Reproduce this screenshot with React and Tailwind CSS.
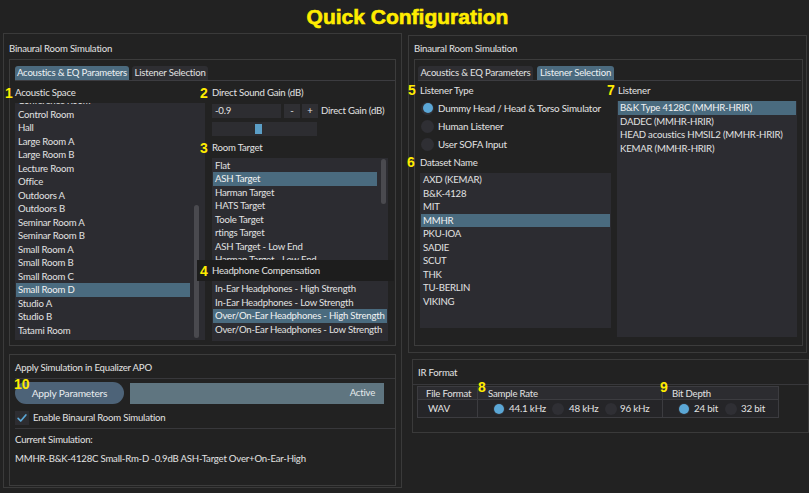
import React from 'react';

const acoustic = [
  'Conference Room', 'Control Room', 'Hall', 'Large Room A', 'Large Room B', 'Lecture Room',
  'Office', 'Outdoors A', 'Outdoors B', 'Seminar Room A', 'Seminar Room B', 'Small Room A',
  'Small Room B', 'Small Room C', 'Small Room D', 'Studio A', 'Studio B', 'Tatami Room',
];

const targets = [
  'Flat', 'ASH Target', 'Harman Target', 'HATS Target', 'Toole Target', 'rtings Target',
  'ASH Target - Low End', 'Harman Target - Low End', 'HATS Target - Low End',
];

const headphones = [
  'In-Ear Headphones - High Strength', 'In-Ear Headphones - Low Strength',
  'Over/On-Ear Headphones - High Strength', 'Over/On-Ear Headphones - Low Strength',
];

const datasets = ['AXD (KEMAR)', 'B&K-4128', 'MIT', 'MMHR', 'PKU-IOA', 'SADIE', 'SCUT', 'THK', 'TU-BERLIN', 'VIKING'];

const listeners = [
  'B&K Type 4128C (MMHR-HRIR)', 'DADEC (MMHR-HRIR)', 'HEAD acoustics HMSIL2 (MMHR-HRIR)', 'KEMAR (MMHR-HRIR)',
];

const Num = ({ children, className = '' }) => (
  <span
    className={`absolute text-[14px] leading-none font-bold tracking-normal text-[#ffec00] font-['Liberation_Sans',Arial,sans-serif] ${className}`}
  >
    {children}
  </span>
);

// plain list box with optional scroll bar on the right
const ListBox = ({ items, selected, className = '', offset = '', bar = null }) => (
  <div className={`flex bg-[#2c2c31] overflow-hidden px-[1px] ${className}`}>
    <div className={`flex-1 min-w-0 ${offset}`}>
      {items.map((t, i) => (
        <div
          key={t}
          className={`h-[13.5px] leading-[13.5px] pl-[2px] whitespace-nowrap ${
            i === selected ? 'bg-[#4a6b7f] text-[#f2f2f2]' : ''
          }`}
        >
          {t}
        </div>
      ))}
    </div>
    {bar}
  </div>
);

const Tabs = ({ active, first, second, className = '' }) => (
  <div className={`flex items-end h-[15px] border-b border-[#3c3c40] whitespace-nowrap ${className}`}>
    <div
      className={`h-[14px] ${first} rounded-t-[3px] flex items-center justify-center ${
        active === 0 ? 'bg-[#4b6a7e] text-[#eef2f4]' : 'bg-[#2e2e32]'
      }`}
    >
      Acoustics &amp; EQ Parameters
    </div>
    <div
      className={`h-[14px] ${second} rounded-t-[3px] flex items-center justify-center ${
        active === 1 ? 'bg-[#4b6a7e] text-[#eef2f4]' : 'bg-[#2e2e32]'
      }`}
    >
      Listener Selection
    </div>
  </div>
);

const Radio = ({ on, size = 'w-[13px] h-[13px]' }) => (
  <span className={`${size} rounded-full bg-[#2f2f34] flex items-center justify-center shrink-0`}>
    {on && <span className="w-[10px] h-[10px] rounded-full bg-[#5ba7d6]" />}
  </span>
);

const LeftColumn = () => (
  <div className="ml-[3px] w-[399px] h-[455px] border border-[#3a3a3a] pl-[5px]">
    <div className="h-[25px] pt-[5px] flex items-center">Binaural Room Simulation</div>

    <div className="w-[387px] h-[287px] border border-[#3c3c3c] px-[5px] pt-[6px]">
      <Tabs active={0} first="w-[114px]" second="w-[76px] ml-[3px]" className="mr-[-5px]" />

      <div className="flex mt-[6px]">
        <div className="w-[190px]">
          <div className="relative h-[12px] leading-[12px]">
            <Num className="-left-[10px] top-[-1px]">1</Num>
            Acoustic Space
          </div>
          <ListBox
            items={acoustic}
            selected={14}
            className="mt-[4px] h-[237px]"
            offset="-mt-[9px]"
            bar={
              <div className="w-[5px] ml-[4px] mr-[5px]">
                <div className="mt-[102px] h-[133px] rounded-[3px] bg-[#4a4a4f]" />
              </div>
            }
          />
        </div>

        <div className="ml-[7px] w-[176px]">
          <div className="relative h-[12px] leading-[12px]">
            <Num className="-left-[12px] top-[-1px]">2</Num>
            Direct Sound Gain (dB)
          </div>
          <div className="mt-[5px] h-[14px] flex items-center">
            <div className="w-[69px] h-full bg-[#2d2d31] pl-[3px] leading-[14px]">-0.9</div>
            <div className="ml-[3px] w-[16px] h-full bg-[#2f2f33] flex items-center justify-center">-</div>
            <div className="ml-[2px] w-[16px] h-full bg-[#2f2f33] flex items-center justify-center">+</div>
            <div className="ml-[3px] whitespace-nowrap">Direct Gain (dB)</div>
          </div>
          <div className="mt-[4px] w-[105px] h-[14px] bg-[#2d2d31] flex items-center pl-[43px]">
            <div className="w-[7px] h-[10px] bg-[#5b9ec6]" />
          </div>
          <div className="relative mt-[6px] h-[12px] leading-[12px]">
            <Num className="-left-[12px] top-[-1px]">3</Num>
            Room Target
          </div>
          <ListBox
            items={targets}
            selected={1}
            className="mt-[4px] h-[102px]"
            offset="pt-[0.5px]"
            bar={
              <div className="w-[5px] ml-[4px] mr-[1px]">
                <div className="mt-[1px] h-[45px] rounded-[3px] bg-[#4a4a4f]" />
              </div>
            }
          />
          <div className="relative h-[21px] pt-[2px] -ml-[15px] -mr-[6px] pl-[15px] bg-[#1d1d1d] flex items-center">
            <Num className="left-[3px] top-[4px]">4</Num>
            Headphone Compensation
          </div>
          <ListBox items={headphones} selected={2} className="h-[60px]" offset="pt-[1px]" />
        </div>
      </div>
    </div>

    <div className="mt-[8px] w-[387px] h-[132px] border border-[#3c3c3c]">
      <div className="h-[23px] pt-[4px] pl-[5px] flex items-center">Apply Simulation in Equalizer APO</div>
      <div className="ml-[5px] border-t border-[#38383b]" />
      <div className="relative mt-[3px] ml-[5px] h-[22px] flex items-center">
        <Num className="left-[-1px] top-[-5px] text-[13px]">10</Num>
        <div className="w-[109px] h-[22px] pt-[1px] rounded-full bg-[#4d6378] flex items-center justify-center text-[10.2px] text-[#e8ecef]">
          Apply Parameters
        </div>
        <div className="ml-[6px] w-[254px] h-[21px] bg-[#5f7580] flex items-center justify-end pr-[9px] text-[#e6eaec]">
          Active
        </div>
      </div>
      <div className="mt-[7px] ml-[5px] h-[14px] flex items-center">
        <div className="w-[14px] h-[14px] bg-[#2d2d31] flex items-center justify-center">
          <svg viewBox="0 0 14 14" className="w-[12px] h-[12px]" fill="none" stroke="#5ba7d6" strokeWidth="2" strokeLinecap="round" strokeLinejoin="round">
            <path d="M2.5 7.5l3 3 6-7" />
          </svg>
        </div>
        <span className="ml-[4px]">Enable Binaural Room Simulation</span>
      </div>
      <div className="mt-[3px] ml-[5px] border-t border-[#38383b]" />
      <div className="mt-[5px] pl-[5px] h-[12px] leading-[12px]">Current Simulation:</div>
      <div className="mt-[7px] pl-[5px] h-[12px] leading-[12px]">
        MMHR-B&amp;K-4128C Small-Rm-D -0.9dB ASH-Target Over+On-Ear-High
      </div>
    </div>
  </div>
);

const RightColumn = () => (
  <div className="ml-[6px] w-[401px]">
    <div className="mt-[2px] w-[399px] h-[318px] border border-[#3a3a3a] pl-[5px]">
      <div className="h-[23px] pt-[3px] flex items-center">Binaural Room Simulation</div>
      <div className="w-[389px] h-[287px] border border-[#3c3c3c] pl-[3px] pt-[6px]">
        <Tabs active={1} first="w-[115px]" second="w-[77px] ml-[4px]" className="mr-[1px]" />
        <div className="flex mt-[4px] pl-[2px]">
          <div className="w-[191px]">
            <div className="relative h-[12px] leading-[12px]">
              <Num className="-left-[12px] top-[-2px]">5</Num>
              Listener Type
            </div>
            <div className="mt-[2px]">
              {['Dummy Head / Head & Torso Simulator', 'Human Listener', 'User SOFA Input'].map((t, i) => (
                <div key={t} className="h-[18px] flex items-center pl-[1px] whitespace-nowrap">
                  <Radio on={i === 0} />
                  <span className="ml-[4px] text-[9.8px]">{t}</span>
                </div>
              ))}
            </div>
            <div className="relative mt-[4px] h-[12px] leading-[12px]">
              <Num className="-left-[13px] top-[-2px]">6</Num>
              Dataset Name
            </div>
            <ListBox items={datasets} selected={3} className="mt-[4px] h-[155px]" />
          </div>
          <div className="ml-[6px] w-[180px]">
            <div className="relative h-[12px] leading-[12px] pl-[1px]">
              <Num className="-left-[10px] top-[-2px]">7</Num>
              Listener
            </div>
            <ListBox items={listeners} selected={0} className="mt-[4px] h-[236px]" />
          </div>
        </div>
      </div>
    </div>

    <div className="mt-[6px] ml-[4px] w-[397px] h-[74px] border border-[#3a3a3a]">
      <div className="h-[24px] pt-[2px] pl-[5px] flex items-center">IR Format</div>
      <div className="border-t border-[#38383b]" />
      <div className="mt-[1px] ml-[4px] w-[362px] border border-[#3c3c40] whitespace-nowrap">
        <div className="flex h-[13px] bg-[#2c2c30] border-b border-[#3c3c40]">
          <div className="w-[60px] border-r border-[#3c3c40] pl-[8px] leading-[13px]">File Format</div>
          <div className="relative w-[185px] border-r border-[#3c3c40] pl-[10px] leading-[13px]">
            <Num className="left-[0px] top-[-7px]">8</Num>
            Sample Rate
          </div>
          <div className="relative flex-1 pl-[9px] leading-[13px]">
            <Num className="-left-[3px] top-[-7px]">9</Num>
            Bit Depth
          </div>
        </div>
        <div className="flex h-[17px] bg-[#252528] text-[9.8px]">
          <div className="w-[60px] border-r border-[#3c3c40] pl-[10px] flex items-center">WAV</div>
          <div className="w-[185px] border-r border-[#3c3c40] pl-[15px] flex items-center">
            <div className="w-[59px] flex items-center">
              <Radio on size="w-[12px] h-[12px]" />
              <span className="ml-[4px]">44.1 kHz</span>
            </div>
            <div className="w-[53px] flex items-center">
              <Radio size="w-[12px] h-[12px]" />
              <span className="ml-[5px]">48 kHz</span>
            </div>
            <div className="flex items-center">
              <Radio size="w-[12px] h-[12px]" />
              <span className="ml-[3px]">96 kHz</span>
            </div>
          </div>
          <div className="flex-1 pl-[15px] flex items-center">
            <div className="w-[47px] flex items-center">
              <Radio on size="w-[12px] h-[12px]" />
              <span className="ml-[4px]">24 bit</span>
            </div>
            <div className="flex items-center">
              <Radio size="w-[12px] h-[12px]" />
              <span className="ml-[4px]">32 bit</span>
            </div>
          </div>
        </div>
      </div>
    </div>
  </div>
);

export default function App() {
  return (
    <div className="w-[809px] h-[493px] overflow-hidden bg-[#222222] text-[#e2e2e2] text-[9.6px] tracking-[-0.2px] font-['Lato','Noto_Sans',sans-serif]">
      <div className="h-[33px] flex items-center justify-center pl-[6px]">
        <h1 className="text-[21px] font-bold tracking-normal text-[#ffec00] [-webkit-text-stroke:0.6px_#ffec00] font-['Liberation_Sans',Arial,sans-serif]">
          Quick Configuration
        </h1>
      </div>
      <div className="flex">
        <LeftColumn />
        <RightColumn />
      </div>
    </div>
  );
}
